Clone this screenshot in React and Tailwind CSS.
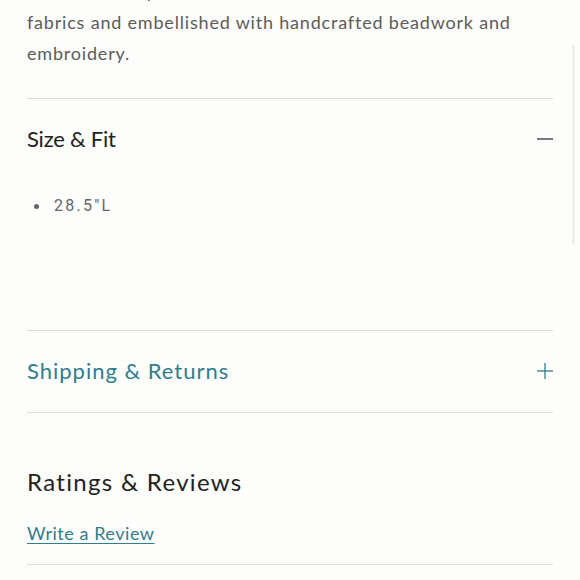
import React from "react";

function Minus() {
  return (
    <svg width="16" height="16" viewBox="0 0 16 16" className="shrink-0">
      <line x1="0" y1="8" x2="16" y2="8" stroke="#333" strokeWidth="1.3" />
    </svg>
  );
}

function Plus() {
  return (
    <svg width="16" height="16" viewBox="0 0 16 16" className="shrink-0">
      <line x1="0" y1="8" x2="16" y2="8" stroke="#2f7d8e" strokeWidth="1.3" />
      <line x1="8" y1="0" x2="8" y2="16" stroke="#2f7d8e" strokeWidth="1.3" />
    </svg>
  );
}

export default function App() {
  return (
    <div className="relative w-[580px] h-[580px] overflow-hidden bg-[#fdfdfb] font-['Lato',sans-serif]">
      <div className="absolute right-[5px] top-[45px] w-[3px] h-[200px] rounded-full bg-[#efefed]" />
      <div className="px-[27px]">
        <p className="mt-[-24px] text-[18px] leading-[31px] tracking-[0.045em] text-[#5c5c5c]">
          This intricately made kurta is crafted from luxurious
          <br />
          fabrics and embellished with handcrafted beadwork and
          <br />
          embroidery.
        </p>
        <div className="mt-[29px] border-t border-[#dcdcda]" />
        <div className="flex items-center justify-between h-[81px] pb-[2px]">
          <h3 className="text-[22px] tracking-[-0.01em] text-[#222]">Size &amp; Fit</h3>
          <Minus />
        </div>
        <ul className="pt-[9px] h-[150px]">
          <li className="flex items-center h-[34px] font-['Roboto',sans-serif] text-[16px] tracking-[0.14em] text-[#666]">
            <span className="w-[5px] h-[5px] rounded-full bg-[#666] ml-[7px] mr-[15px]" />
            28.5"L
          </li>
        </ul>
        <div className="border-t border-[#dcdcda]" />
        <div className="flex items-center justify-between h-[81px] pb-[2px]">
          <h3 className="text-[22px] tracking-[0.045em] text-[#2f7d8e]">Shipping &amp; Returns</h3>
          <Plus />
        </div>
        <div className="border-t border-[#dcdcda]" />
        <h2 className="mt-[53px] text-[24px] leading-[32px] tracking-[0.055em] text-[#222]">Ratings &amp; Reviews</h2>
        <a href="#" className="inline-block mt-[23px] text-[18px] leading-[24px] tracking-[0.03em] text-[#2f7d8e] underline underline-offset-[3px]">
          Write a Review
        </a>
        <div className="mt-[18px] border-t border-[#dcdcda]" />
      </div>
    </div>
  );
}
